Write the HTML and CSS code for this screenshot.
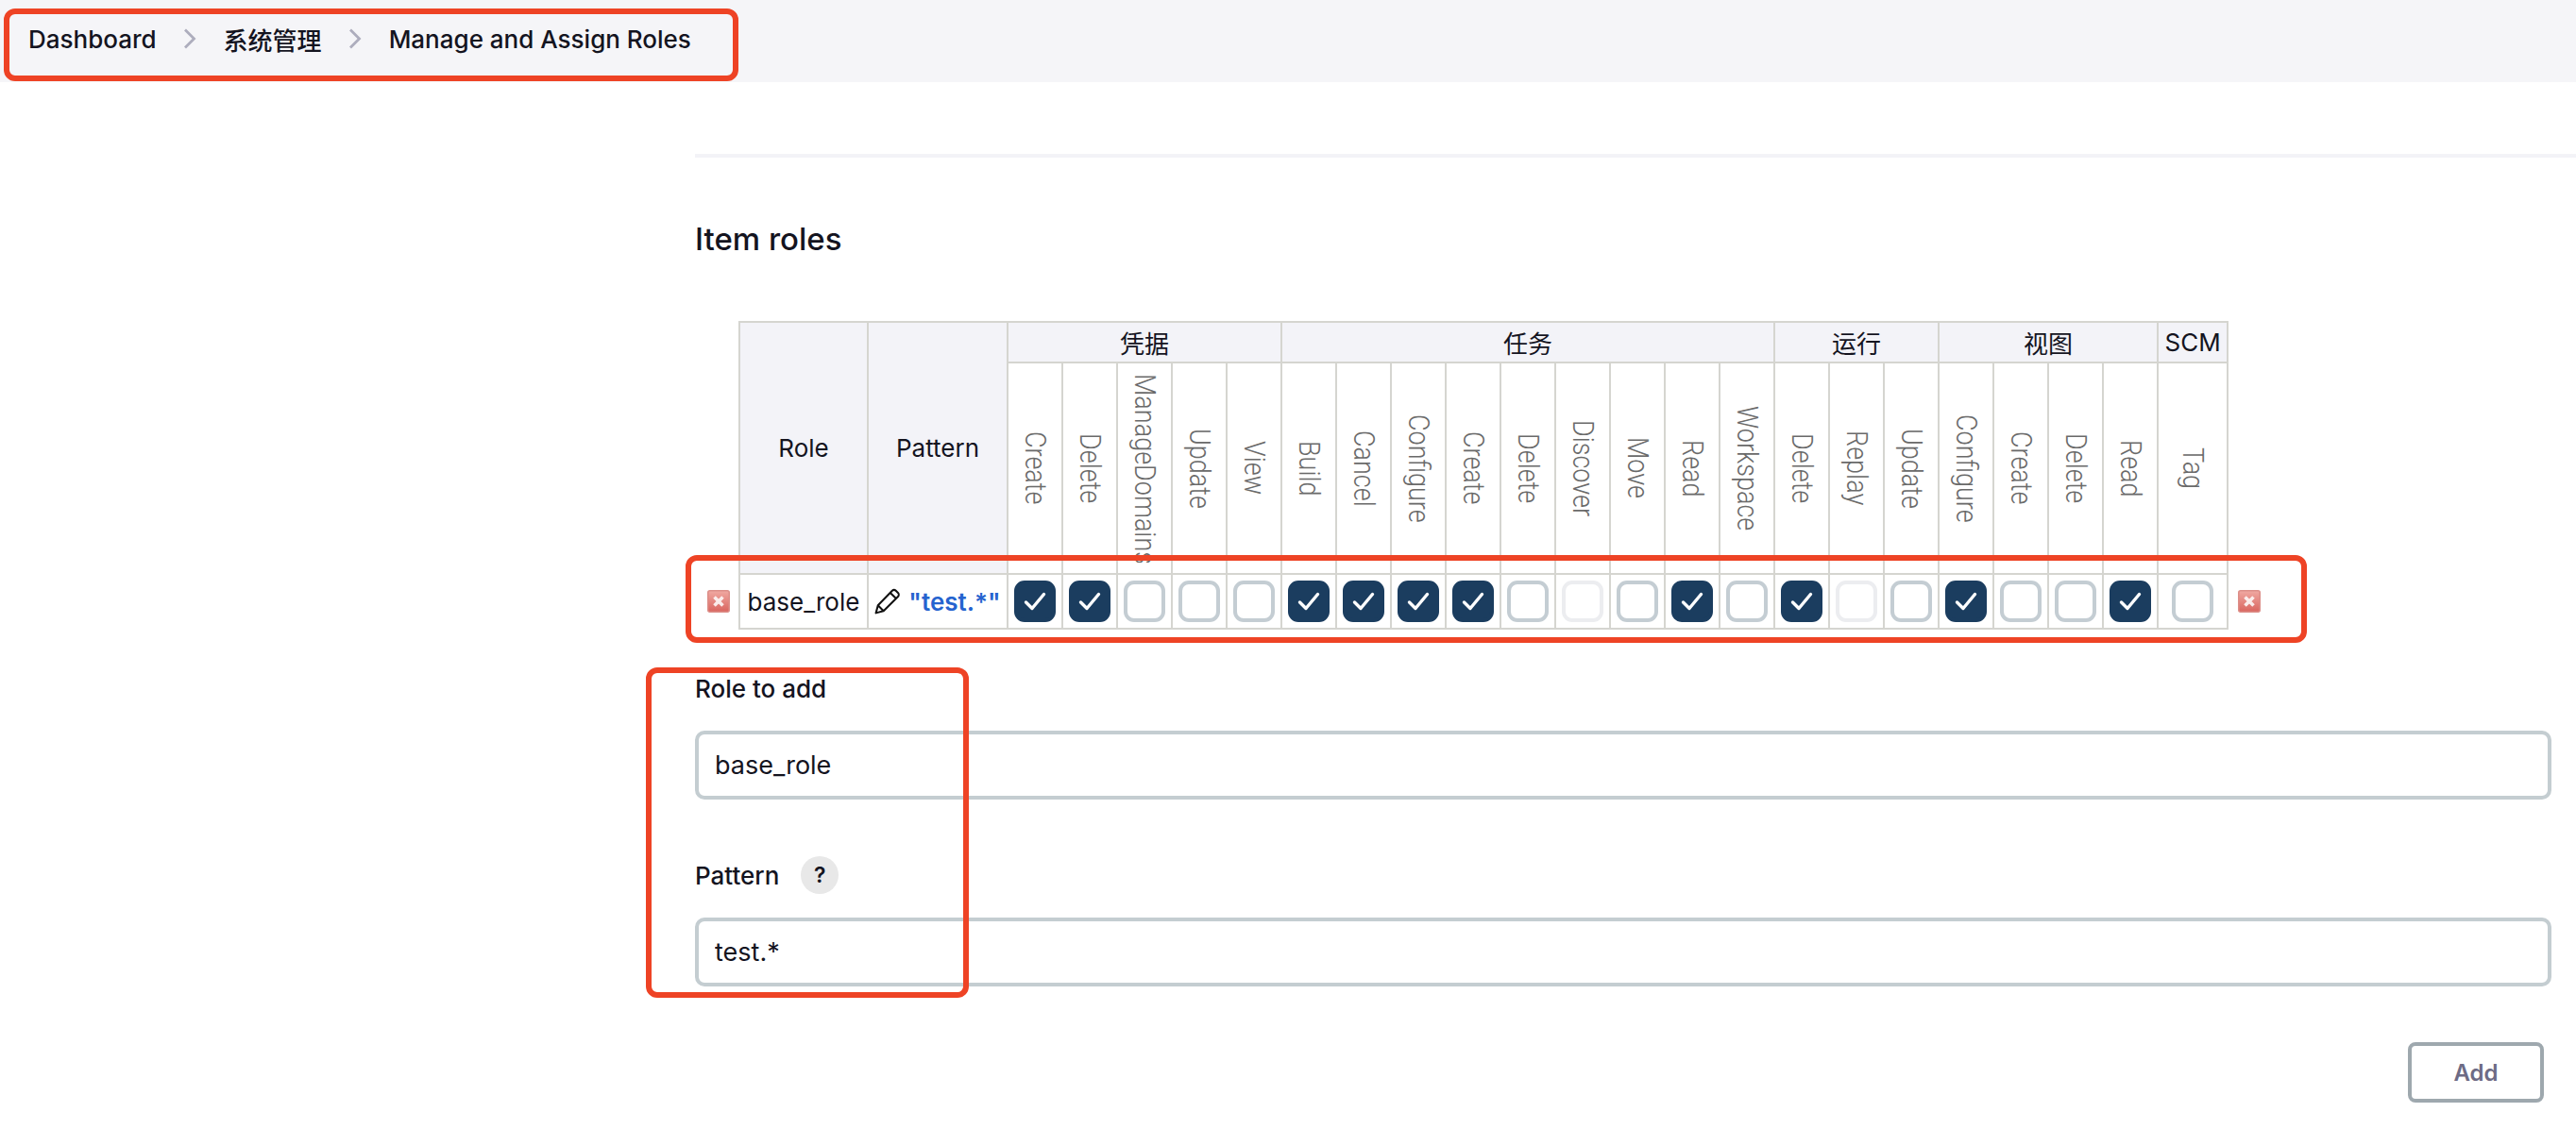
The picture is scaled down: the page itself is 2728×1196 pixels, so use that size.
FILE: index.html
```html
<!DOCTYPE html>
<html lang="zh-CN">
<head>
<meta charset="utf-8">
<title>Manage and Assign Roles</title>
<link rel="stylesheet" href="styles.css">
</head>
<body>
<svg class="defs" width="0" height="0" aria-hidden="true">
  <symbol id="check" viewBox="0 0 44 44"><path d="M12.5 23l6.5 6.5L31.5 14.5" fill="none" stroke="#fff" stroke-width="3.4" stroke-linecap="round" stroke-linejoin="round"/></symbol>
  <symbol id="chev" viewBox="0 0 14 22"><path d="M2 1.5l9.5 9.5L2 20.5" fill="none" stroke="#adadbd" stroke-width="2.8"/></symbol>
  <symbol id="del" viewBox="0 0 24 24">
    <defs><linearGradient id="redg" x1="0" y1="0" x2="0" y2="1"><stop offset="0" stop-color="#f0a9a2"/><stop offset="1" stop-color="#d9645e"/></linearGradient></defs>
    <rect x=".75" y=".75" width="22.5" height="22.5" rx="2" fill="url(#redg)" stroke="#dc8e88" stroke-width="1.5"/>
    <path d="M7.5 7.5l9 9M16.5 7.5l-9 9" stroke="#fff" stroke-width="3.6" opacity=".85"/>
  </symbol>
</svg>

<header class="topbar">
  <nav class="crumbs">
    <span class="crumb">Dashboard</span>
    <svg class="chev"><use href="#chev"/></svg>
    <span class="crumb">系统管理</span>
    <svg class="chev"><use href="#chev"/></svg>
    <span class="crumb">Manage and Assign Roles</span>
  </nav>
</header>

<main class="main">
  <hr class="rule">
  <h2 class="title">Item roles</h2>

  <table class="grid">
    <colgroup>
      <col class="c-del"><col class="c-role"><col class="c-pat">
      <col class="c-p"><col class="c-p"><col class="c-p"><col class="c-p"><col class="c-p">
      <col class="c-p"><col class="c-p"><col class="c-p"><col class="c-p"><col class="c-p"><col class="c-p"><col class="c-p"><col class="c-p"><col class="c-p">
      <col class="c-p"><col class="c-p"><col class="c-p">
      <col class="c-p"><col class="c-p"><col class="c-p"><col class="c-p">
      <col class="c-scm"><col class="c-del2">
    </colgroup>
    <thead>
      <tr class="r-group">
        <td class="blank" rowspan="2"></td>
        <th rowspan="2">Role</th>
        <th rowspan="2">Pattern</th>
        <th colspan="5">凭据</th>
        <th colspan="9">任务</th>
        <th colspan="3">运行</th>
        <th colspan="4">视图</th>
        <th>SCM</th>
        <td class="blank" rowspan="2"></td>
      </tr>
      <tr class="r-perm">
        <td class="perm"><span class="vert">Create</span></td>
        <td class="perm"><span class="vert">Delete</span></td>
        <td class="perm"><span class="vert">ManageDomains</span></td>
        <td class="perm"><span class="vert">Update</span></td>
        <td class="perm"><span class="vert">View</span></td>
        <td class="perm"><span class="vert">Build</span></td>
        <td class="perm"><span class="vert">Cancel</span></td>
        <td class="perm"><span class="vert">Configure</span></td>
        <td class="perm"><span class="vert">Create</span></td>
        <td class="perm"><span class="vert">Delete</span></td>
        <td class="perm"><span class="vert">Discover</span></td>
        <td class="perm"><span class="vert">Move</span></td>
        <td class="perm"><span class="vert">Read</span></td>
        <td class="perm"><span class="vert">Workspace</span></td>
        <td class="perm"><span class="vert">Delete</span></td>
        <td class="perm"><span class="vert">Replay</span></td>
        <td class="perm"><span class="vert">Update</span></td>
        <td class="perm"><span class="vert">Configure</span></td>
        <td class="perm"><span class="vert">Create</span></td>
        <td class="perm"><span class="vert">Delete</span></td>
        <td class="perm"><span class="vert">Read</span></td>
        <td class="perm"><span class="vert">Tag</span></td>
      </tr>
    </thead>
    <tbody>
      <tr class="r-data">
        <td class="blank del-l"><svg class="del"><use href="#del"/></svg></td>
        <td class="role">base_role</td>
        <td class="pat">
          <span class="pat-in">
            <svg class="pencil" viewBox="0 0 26 26"><path d="M1.5 24.5l2-7.5L17.5 2.6c1-1 2.6-1 3.6 0l2.1 2.1c1 1 1 2.6 0 3.6L9 22.5l-7.5 2zM3.5 17l5.5 5.5M15.6 4.6l5.7 5.7" fill="none" stroke="#111" stroke-width="1.9" stroke-linejoin="round"/></svg>
            <a class="pat-link">"test.*"</a>
          </span>
        </td>
        <td class="box"><span class="cb on"><svg><use href="#check"/></svg></span></td>
        <td class="box"><span class="cb on"><svg><use href="#check"/></svg></span></td>
        <td class="box"><span class="cb"></span></td>
        <td class="box"><span class="cb"></span></td>
        <td class="box"><span class="cb"></span></td>
        <td class="box"><span class="cb on"><svg><use href="#check"/></svg></span></td>
        <td class="box"><span class="cb on"><svg><use href="#check"/></svg></span></td>
        <td class="box"><span class="cb on"><svg><use href="#check"/></svg></span></td>
        <td class="box"><span class="cb on"><svg><use href="#check"/></svg></span></td>
        <td class="box"><span class="cb"></span></td>
        <td class="box"><span class="cb dis"></span></td>
        <td class="box"><span class="cb"></span></td>
        <td class="box"><span class="cb on"><svg><use href="#check"/></svg></span></td>
        <td class="box"><span class="cb"></span></td>
        <td class="box"><span class="cb on"><svg><use href="#check"/></svg></span></td>
        <td class="box"><span class="cb dis"></span></td>
        <td class="box"><span class="cb"></span></td>
        <td class="box"><span class="cb on"><svg><use href="#check"/></svg></span></td>
        <td class="box"><span class="cb"></span></td>
        <td class="box"><span class="cb"></span></td>
        <td class="box"><span class="cb on"><svg><use href="#check"/></svg></span></td>
        <td class="box"><span class="cb"></span></td>
        <td class="blank del-r"><svg class="del"><use href="#del"/></svg></td>
      </tr>
    </tbody>
  </table>

  <form class="form">
    <div class="field">
      <label class="label">Role to add</label>
      <input class="input" value="base_role">
    </div>
    <div class="field">
      <label class="label">Pattern <span class="help">?</span></label>
      <input class="input" value="test.*">
    </div>
    <div class="actions"><button class="add" type="button">Add</button></div>
  </form>
</main>

<div class="mark mark-crumbs"></div>
<div class="mark mark-row"></div>
<div class="mark mark-form"></div>
</body>
</html>
```
FILE: styles.css
```css
* { box-sizing: border-box; }
html, body { margin: 0; padding: 0; width: 2728px; height: 1196px; overflow: hidden; background: #fff; }
body { position: relative; font-family: Inter, "Noto Sans CJK SC", sans-serif; color: #14141f; }
.defs { position: absolute; }

.topbar { height: 87px; background: #f5f5f8; padding: 0 30px; }
.crumbs { display: flex; align-items: center; height: 82px; font-size: 26px; font-weight: 450; }
.chev { width: 14px; height: 22px; margin: 0 28.5px; flex: none; }

.main { padding: 0 26px 0 736px; }
.rule { height: 4px; margin: 76px -26px 0 0; border: 0; background: #f3f3f7; }
.title { margin: 65px 0 0; font-size: 33px; line-height: 42px; font-weight: 550; }

.grid { margin-top: 66px; border-collapse: collapse; table-layout: fixed; width: 1626px; }
.c-del { width: 47px; }
.c-role { width: 136px; }
.c-pat { width: 148px; }
.c-p { width: 58px; }
.c-scm { width: 74px; }
.c-del2 { width: 48px; }

.grid th, .grid td { border: 2px solid #d5d5d0; padding: 0; text-align: center; }
.grid th { background: #f3f3f8; font-size: 26px; font-weight: 420; }
.grid .blank { border: 0; background: transparent; }
.r-group { height: 43px; }
.r-perm { height: 224px; }
.r-data { height: 58px; }

.perm { height: 224px; vertical-align: middle; overflow: hidden; }
.vert { display: inline-block; max-height: 200px; overflow: hidden; writing-mode: vertical-rl; font-family: Roboto, sans-serif; font-weight: 300; font-size: 27px; color: #6a6a6a; line-height: 30px; white-space: nowrap; vertical-align: middle; transform: scaleX(1.15); }

.role { font-size: 26px; }
.pat { font-size: 26px; }
.pat-in { display: flex; align-items: center; justify-content: center; gap: 8px; }
.pencil { width: 28px; height: 28px; flex: none; }
.pat-link { color: #2563cf; font-weight: 600; font-size: 26px; }
.box { height: 58px; }
.cb { display: block; width: 44px; height: 44px; margin: 0 auto; border: 4px solid #c4cdd3; border-radius: 11px; background: #fff; position: relative; }
.cb.on { background: #1b3d5f; border-color: #1b3d5f; }
.cb.dis { border-color: #ecedf0; }
.cb svg { position: absolute; left: -4px; top: -4px; width: 44px; height: 44px; }
.del { display: block; width: 24px; height: 24px; }
.del-l .del { margin-left: 13px; }
.del-r .del { margin-left: 10px; }

.form { margin-top: 42px; }
.field { margin-bottom: 60px; }
.label { display: flex; align-items: center; height: 40px; gap: 23px; font-size: 26px; font-weight: 450; margin-bottom: 25px; }
.help { width: 40px; height: 40px; border-radius: 50%; background: #e8e8e8; display: flex; align-items: center; justify-content: center; font-size: 23px; font-weight: 600; }
.input { display: block; width: 100%; height: 73px; border: 4px solid #c4cdd1; border-radius: 10px; padding: 0 17px; font: 400 27px Inter, sans-serif; color: #14141f; background: #fff; outline: 0; }
.actions { display: flex; justify-content: flex-end; padding-right: 8px; margin-top: -1px; }
.add { width: 144px; height: 64px; border: 4px solid #9ea8ae; border-radius: 8px; background: #fff; color: #6d6b85; font: 600 24px Inter, sans-serif; }

.mark { position: absolute; border: 6px solid #ee4325; border-radius: 12px; pointer-events: none; }
.mark-crumbs { left: 4px; top: 9px; width: 778px; height: 77px; }
.mark-row { left: 726px; top: 588px; width: 1717px; height: 93px; }
.mark-form { left: 684px; top: 707px; width: 342px; height: 350px; }
```
